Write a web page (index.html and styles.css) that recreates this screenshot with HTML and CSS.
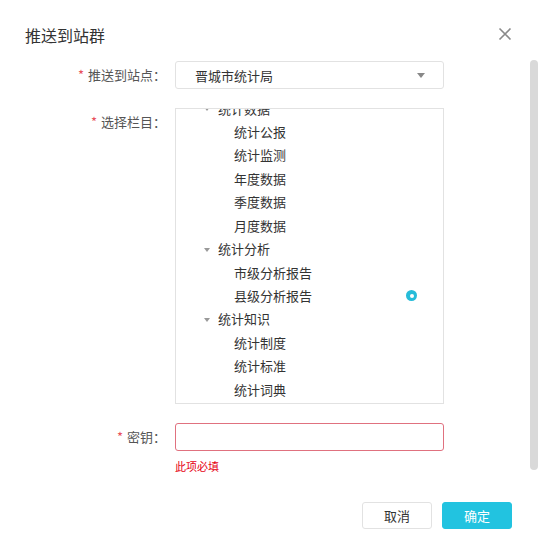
FILE: index.html
```html
<!DOCTYPE html>
<html lang="zh-CN">
<head>
<meta charset="utf-8">
<title>推送到站群</title>
<link rel="stylesheet" href="styles.css">
</head>
<body>
<div class="dialog">
  <div class="header">
    <div class="title">推送到站群</div>
    <svg class="close" width="14" height="14" viewBox="0 0 14 14"><path d="M1.5 1.5 L12.5 12.5 M12.5 1.5 L1.5 12.5" stroke="#8a8a8a" stroke-width="1.6" fill="none"/></svg>
  </div>
  <div class="form">
    <div class="label"><span class="req">*</span>推送到站点：</div>
    <div class="select">
      <span>晋城市统计局</span>
      <span class="caret"></span>
    </div>

    <div class="label label-top"><span class="req">*</span>选择栏目：</div>
    <div class="tree">
      <ul class="tree-list">
        <li class="node parent"><span class="tri"></span>统计数据</li>
        <li class="node child">统计公报</li>
        <li class="node child">统计监测</li>
        <li class="node child">年度数据</li>
        <li class="node child">季度数据</li>
        <li class="node child">月度数据</li>
        <li class="node parent"><span class="tri"></span>统计分析</li>
        <li class="node child">市级分析报告</li>
        <li class="node child"><span>县级分析报告</span><span class="radio"></span></li>
        <li class="node parent"><span class="tri"></span>统计知识</li>
        <li class="node child">统计制度</li>
        <li class="node child">统计标准</li>
        <li class="node child">统计词典</li>
      </ul>
    </div>

    <div class="label"><span class="req">*</span>密钥：</div>
    <div class="field">
      <div class="input error"></div>
      <div class="err-msg">此项必填</div>
    </div>
  </div>
  <div class="footer">
    <button class="btn btn-cancel">取消</button>
    <button class="btn btn-ok">确定</button>
  </div>
  <div class="scrollbar"></div>
</div>
</body>
</html>
```

FILE: styles.css
```css
* { box-sizing: border-box; }
html, body {
  margin: 0;
  padding: 0;
  background: #fff;
}
body {
  font-family: "Noto Sans CJK SC", "Liberation Sans", sans-serif;
  font-size: 13px;
  color: #333;
  width: 539px;
  height: 554px;
  overflow: hidden;
}
.dialog {
  position: relative;
  width: 539px;
  height: 554px;
}
.header {
  display: flex;
  align-items: center;
  justify-content: space-between;
  padding: 24px 27px 0 25px;
  height: 61px;
  align-items: flex-start;
}
.title {
  font-size: 16px;
  line-height: 22px;
  color: #333;
}
.close {
  margin-top: 3px;
}
.form {
  display: grid;
  grid-template-columns: 166px 269px;
  column-gap: 9px;
  row-gap: 19px;
  align-items: start;
}
.label {
  text-align: right;
  line-height: 28px;
  color: #555;
  white-space: nowrap;
}
.req {
  color: #e8505b;
  margin-right: 4px;
  font-size: 13px;
}
.select {
  height: 28px;
  border: 1px solid #e2e2e2;
  border-radius: 3px;
  display: flex;
  align-items: center;
  justify-content: space-between;
  padding: 0 18px 0 19px;
  color: #333;
}
.caret {
  width: 0;
  height: 0;
  border-left: 4.5px solid transparent;
  border-right: 4.5px solid transparent;
  border-top: 5px solid #888;
}
.tree {
  height: 296px;
  border: 1px solid #e2e2e2;
  overflow: hidden;
}
.tree-list {
  list-style: none;
  margin: -12.5px 0 0 0;
  padding: 0;
}
.node {
  height: 23.45px;
  line-height: 23.45px;
  display: flex;
  align-items: center;
  color: #333;
  white-space: nowrap;
}
.parent {
  padding-left: 28px;
}
.child {
  padding-left: 58px;
  padding-right: 26px;
  justify-content: space-between;
}
.tri {
  width: 0;
  height: 0;
  border-left: 3.5px solid transparent;
  border-right: 3.5px solid transparent;
  border-top: 4px solid #999;
  margin-right: 8px;
  margin-top: 2px;
}
.radio {
  width: 11px;
  height: 11px;
  border-radius: 50%;
  background: #26bcd9;
  display: flex;
  align-items: center;
  justify-content: center;
}
.radio::after {
  content: "";
  width: 4px;
  height: 4px;
  border-radius: 50%;
  background: #fff;
}
.field {
  display: flex;
  flex-direction: column;
}
.input {
  height: 28px;
  border: 1px solid #e2e2e2;
  border-radius: 3px;
}
.input.error {
  border-color: #e0717f;
}
.err-msg {
  color: #e60012;
  font-size: 11px;
  line-height: 14px;
  margin-top: 8px;
}
.footer {
  display: flex;
  justify-content: flex-end;
  gap: 10px;
  padding: 29px 27px 0 0;
}
.btn {
  width: 70px;
  height: 27px;
  border-radius: 3px;
  font-family: inherit;
  font-size: 13px;
  padding: 0;
  cursor: pointer;
}
.btn-cancel {
  background: #fff;
  border: 1px solid #e2e2e2;
  color: #333;
}
.btn-ok {
  background: #22c3e0;
  border: 1px solid #22c3e0;
  color: #fff;
}
.scrollbar {
  position: absolute;
  left: 530px;
  top: 60px;
  width: 8px;
  height: 410px;
  border-radius: 4px;
  background: #d9d9d9;
}
```
